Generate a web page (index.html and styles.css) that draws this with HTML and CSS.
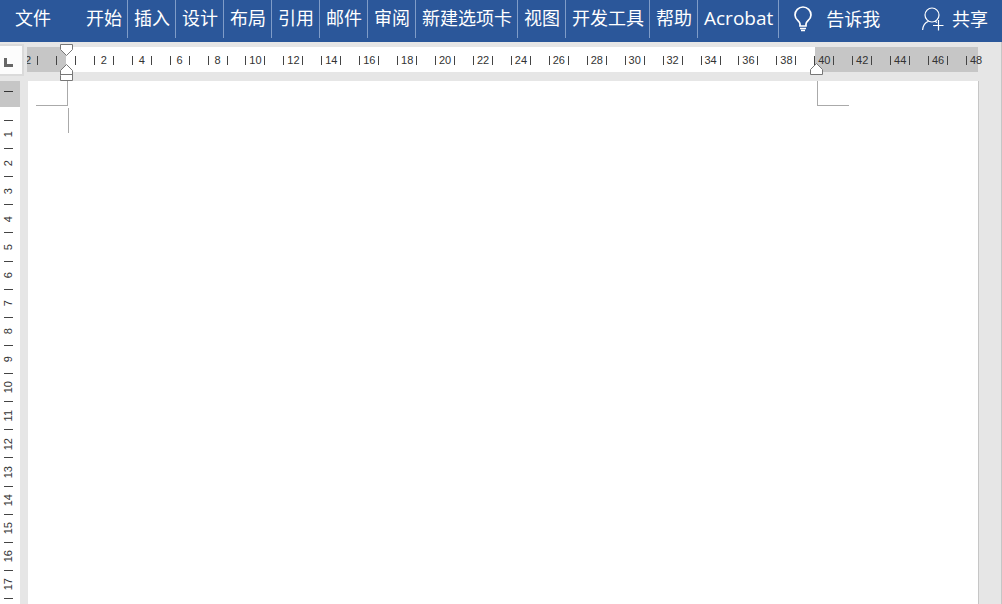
FILE: index.html
```
<!DOCTYPE html>
<html lang="zh-CN">
<head>
<meta charset="UTF-8">
<meta name="viewport" content="width=device-width, initial-scale=1.0">
<title>文档</title>
<link rel="stylesheet" href="styles.css">
</head>
<body>

<div class="app">

 <nav class="ribbon">
  <button class="tab file-tab">文件</button>
  <button class="tab">开始</button>
  <button class="tab">插入</button>
  <button class="tab">设计</button>
  <button class="tab">布局</button>
  <button class="tab">引用</button>
  <button class="tab">邮件</button>
  <button class="tab">审阅</button>
  <button class="tab">新建选项卡</button>
  <button class="tab">视图</button>
  <button class="tab">开发工具</button>
  <button class="tab">帮助</button>
  <button class="tab latin-tab">Acrobat</button>
  <button class="tell-me">
   <svg width="20" height="26" viewBox="0 0 20 26" fill="none" stroke="currentColor">
    <path d="M7 20v-2c0-3-5-4-5-9a8 8 0 0 1 16 0c0 5-5 6-5 9v2z" stroke-width="1.700"/>
    <path d="M7 22.500h6M8 24.500h4" stroke-width="1.500"/>
   </svg>
   <span>告诉我</span>
  </button>
  <button class="share">
   <svg width="22" height="24" viewBox="0 0 22 24" fill="none" stroke="currentColor" stroke-width="1.2">
    <circle cx="10" cy="8" r="7"/>
    <path d="M.6 23c.4-4.500 2.600-7.500 6-8.700M13 14.300l2 1.200M16.500 13v10.500M11 18.500h10.500"/>
   </svg>
   <span>共享</span>
  </button>
 </nav>

 <div class="ruler-row">
  <button class="tab-stop" aria-label="制表符">
   <svg width="10" height="9" viewBox="0 0 10 9"><path d="M0 0h3v6h6v3H0z" fill="#666"/></svg>
  </button>
  <div class="h-ruler">
   <div class="zones">
    <div class="zone-left"></div>
    <div class="zone-text"></div>
    <div class="zone-right"></div>
   </div>
   <div class="h-clip">
    <div class="h-scale" id="hScale"></div>
   </div>
   <svg class="marker marker-left" width="13" height="38" viewBox="0 0 13 38" fill="#fff" stroke="#777">
    <path d="M.5.500h12v5l-6 6-6-6z"/>
    <path d="M.5 31.500v-5l6-6 6 6v10H.5zM.5 30.500h12"/>
   </svg>
   <svg class="marker marker-right" width="13" height="12" viewBox="0 0 13 12" fill="#fff" stroke="#777">
    <path d="M.5 11.500v-5l6-6 6 6v5z"/>
   </svg>
  </div>
 </div>

 <div class="workspace">
  <div class="v-ruler">
   <div class="v-margin"><div class="v-tick"></div></div>
   <div class="v-scale" id="vScale"></div>
  </div>
  <main class="page">
   <div class="crop-marks">
    <div class="crop crop-left"></div>
    <div class="crop crop-right"></div>
   </div>
   <div class="caret"></div>
  </main>
 </div>

</div>

<script>
 // 水平标尺：-2 到 48，每格两个字符
 var hScale = document.getElementById('hScale');
 for (var i = -2; i <= 48; i += 2) {
  var cell = document.createElement('div');
  cell.className = 'h-cell';
  var num = document.createElement('span');
  num.textContent = i === 0 ? '' : Math.abs(i);
  cell.appendChild(num);
  hScale.appendChild(cell);
 }

 // 垂直标尺
 var vScale = document.getElementById('vScale');
 for (var j = 1; j <= 17; j++) {
  var row = document.createElement('div');
  row.className = 'v-cell';
  var label = document.createElement('span');
  label.textContent = j;
  row.appendChild(label);
  vScale.appendChild(row);
 }
</script>

</body>
</html>
```
FILE: styles.css
```
* {
 box-sizing: border-box;
}
body {
 margin: 0;
 font-family: "Open Sans", "Noto Sans CJK SC", sans-serif;
 background-color: #e6e6e6;
 overflow: hidden;
}
button {
 margin: 0;
 border: none;
 background: none;
 color: #fff;
 font-family: inherit;
 font-size: 18px;
 line-height: 36px;
 white-space: nowrap;
 cursor: pointer;
}
.app {
 display: flex;
 flex-direction: column;
 height: 100vh;
 border-right: 1px solid #c6c6c6;
}

/* 功能区 */
.ribbon {
 display: flex;
 align-items: flex-start;
 height: 42px;
 flex-shrink: 0;
 margin-right: -1px;
 background-color: #2b579a;
}
.tab {
 height: 38px;
 padding: 0 5px 2px 6px;
 border-right: 1px solid #7f9cc8;
}
.file-tab {
 border-right: none;
 padding: 0 29px 2px 15px;
}
.latin-tab {
 font-size: 19px;
}
.tell-me,
.share {
 display: flex;
 align-items: center;
 height: 38px;
 padding: 0 14px;
}
.tell-me {
 gap: 13px;
}
.share {
 gap: 8px;
 margin-left: auto;
}

/* 水平标尺 */
.ruler-row {
 display: flex;
 height: 39px;
 flex-shrink: 0;
}
.tab-stop {
 display: flex;
 align-items: center;
 width: 24px;
 height: 32px;
 margin: 2px 3px 0 0;
 padding: 4px 0 0 4px;
 background-color: #fcfcfc;
 border: solid #dadada;
 border-width: 2px 2px 2px 0;
}
.h-ruler {
 position: relative;
 flex: 1;
 margin: 5px 18px 9px 0;
}
.zones {
 display: flex;
 height: 25px;
 margin-right: 5px;
}
.zone-left {
 width: 39px;
 background-color: #c6c6c6;
}
.zone-text {
 flex: 1;
 background-color: #fff;
}
.zone-right {
 width: 163px;
 background-color: #c6c6c6;
}
.h-clip {
 position: absolute;
 inset: 0;
 overflow: hidden;
}
.h-scale {
 display: flex;
 height: 27px;
 align-items: center;
 margin: 0 -12px 0 -18px;
}
.h-cell {
 flex: 1;
 display: flex;
 justify-content: center;
}
.h-cell span {
 width: 20px;
 height: 9px;
 border: solid #444;
 border-width: 0 1px;
 text-align: center;
 font: 11px/9px "Liberation Sans", sans-serif;
 color: #333;
}
.marker {
 position: absolute;
}
.marker-left {
 left: 33px;
 top: -3px;
}
.marker-right {
 right: 160px;
 top: 16px;
}

/* 编辑区 */
.workspace {
 display: flex;
 flex: 1;
 min-height: 0;
}
.v-ruler {
 width: 20px;
 margin-right: 8px;
 background-color: #fff;
 overflow: hidden;
}
.v-margin {
 height: 26px;
 padding: 10px 0 0 4px;
 background-color: #c6c6c6;
}
.v-tick {
 width: 9px;
 height: 1px;
 background-color: #333;
}
.v-scale {
 display: grid;
 grid-template-rows: repeat(17, 1fr);
 width: 9px;
 height: 479px;
 margin: 13px 0 0 4px;
 border-top: 1px solid #444;
}
.v-cell {
 display: flex;
 align-items: center;
 justify-content: center;
 border-bottom: 1px solid #444;
}
.v-cell span {
 writing-mode: vertical-rl;
 transform: rotate(180deg);
 font: 11px/9px "Liberation Sans", sans-serif;
 color: #333;
}
.page {
 flex: 1;
 margin-right: 22px;
 background-color: #fff;
 border-right: 1px solid #c6c6c6;
}
.crop-marks {
 display: flex;
 justify-content: space-between;
 padding: 0 129px 0 8px;
}
.crop {
 width: 32px;
 height: 25px;
 border-bottom: 1px solid #aaa;
}
.crop-left {
 border-right: 1px solid #aaa;
}
.crop-right {
 border-left: 1px solid #aaa;
}
.caret {
 width: 1px;
 height: 25px;
 margin: 2px 0 0 40px;
 background-color: #aaa;
}
```
